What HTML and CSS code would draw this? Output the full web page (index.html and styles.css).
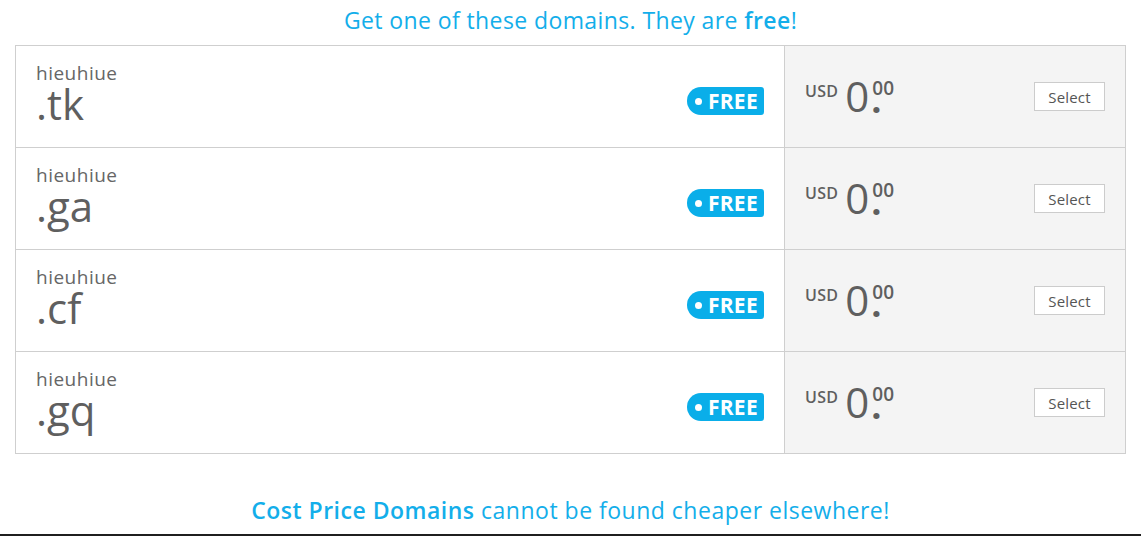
FILE: index.html
```html
<!DOCTYPE html>
<html>
<head>
<meta charset="utf-8">
<link rel="stylesheet" href="styles.css">
</head>
<body>
<div class="page">
  <h2 class="title">Get one of these domains. They are <strong>free</strong>!</h2>
  <div class="table">
    <div class="row">
      <div class="name"><span class="sld">hieuhiue</span><span class="tld">.tk</span></div>
      <div class="badge-cell"><span class="badge"><span class="dot"></span>FREE</span></div>
      <div class="price">
        <div class="amount"><span class="cur">USD</span><span class="int">0</span><span class="dec"><span class="cents">00</span><span class="pt">.</span></span></div>
        <button class="select">Select</button>
      </div>
    </div>
    <div class="row">
      <div class="name"><span class="sld">hieuhiue</span><span class="tld">.ga</span></div>
      <div class="badge-cell"><span class="badge"><span class="dot"></span>FREE</span></div>
      <div class="price">
        <div class="amount"><span class="cur">USD</span><span class="int">0</span><span class="dec"><span class="cents">00</span><span class="pt">.</span></span></div>
        <button class="select">Select</button>
      </div>
    </div>
    <div class="row">
      <div class="name"><span class="sld">hieuhiue</span><span class="tld">.cf</span></div>
      <div class="badge-cell"><span class="badge"><span class="dot"></span>FREE</span></div>
      <div class="price">
        <div class="amount"><span class="cur">USD</span><span class="int">0</span><span class="dec"><span class="cents">00</span><span class="pt">.</span></span></div>
        <button class="select">Select</button>
      </div>
    </div>
    <div class="row">
      <div class="name"><span class="sld">hieuhiue</span><span class="tld">.gq</span></div>
      <div class="badge-cell"><span class="badge"><span class="dot"></span>FREE</span></div>
      <div class="price">
        <div class="amount"><span class="cur">USD</span><span class="int">0</span><span class="dec"><span class="cents">00</span><span class="pt">.</span></span></div>
        <button class="select">Select</button>
      </div>
    </div>
  </div>
  <p class="footer-note"><strong>Cost Price Domains</strong> cannot be found cheaper elsewhere!</p>
</div>
<div class="bottom-bar"></div>
</body>
</html>
```
FILE: styles.css
```css
html, body {
  margin: 0;
  padding: 0;
  background: #fff;
  font-family: "Open Sans", "Liberation Sans", sans-serif;
  color: #666;
}
.page {
  padding: 0 15px;
  height: 534px;
  box-sizing: border-box;
}
.title {
  margin: 0;
  height: 45px;
  padding-top: 4px;
  box-sizing: border-box;
  text-align: center;
  font-size: 23px;
  letter-spacing: 0.4px;
  font-weight: 400;
  line-height: 32px;
  color: #13aeea;
}
.title strong { font-weight: 600; }
.table {
  border: 1px solid #cfcfcf;
}
.row {
  display: flex;
  height: 101px;
  border-top: 1px solid #cfcfcf;
}
.row:first-child { border-top: 0; }
.name {
  flex: 1;
  display: flex;
  flex-direction: column;
  padding: 15px 0 0 20px;
}
.sld {
  font-size: 19px;
  letter-spacing: 0.5px;
  line-height: 24px;
  color: #666;
}
.tld {
  font-size: 42px;
  line-height: 44px;
  color: #5f5f5f;
  margin-top: -3px;
}
.badge-cell {
  display: flex;
  align-items: flex-start;
  padding: 41px 20px 0 0;
}
.badge {
  display: inline-flex;
  align-items: center;
  height: 28px;
  background: #0aaee9;
  color: #fff;
  font-size: 21px;
  letter-spacing: 0.3px;
  font-weight: 700;
  border-radius: 14px 3px 3px 14px;
  padding: 0 6px 0 8px;
  box-sizing: border-box;
}
.dot {
  width: 7px;
  height: 7px;
  border-radius: 50%;
  background: #fff;
  margin-right: 6px;
}
.price {
  width: 341px;
  box-sizing: border-box;
  border-left: 1px solid #cfcfcf;
  background: #f4f4f4;
  display: flex;
  justify-content: space-between;
  align-items: flex-start;
  padding: 0 20px 0 20px;
}
.amount {
  display: flex;
  align-items: flex-start;
  padding-top: 27px;
  color: #5f5f5f;
}
.cur {
  font-size: 16px;
  font-weight: 600;
  letter-spacing: 0.3px;
  line-height: 18px;
  margin-top: 9px;
  margin-right: 7px;
}
.int {
  font-size: 42px;
  line-height: 46px;
  margin-right: 3px;
}
.dec {
  position: relative;
  display: flex;
  flex-direction: column;
}
.cents {
  font-size: 19px;
  font-weight: 600;
  line-height: 18px;
  margin-top: 6px;
}
.pt {
  position: absolute;
  left: -1px;
  top: 24px;
  font-size: 36px;
  font-weight: 700;
  line-height: 6px;
}
.select {
  margin-top: 36px;
  width: 71px;
  height: 29px;
  background: #fff;
  border: 1px solid #cccccc;
  font-family: "Open Sans", "Liberation Sans", sans-serif;
  font-size: 15px;
  letter-spacing: 0.2px;
  color: #555;
  padding: 0;
}
.footer-note {
  margin: 40px 0 0;
  text-align: center;
  font-size: 23px;
  letter-spacing: 0.5px;
  color: #13aeea;
  line-height: 32px;
}
.footer-note strong { font-weight: 600; }
.bottom-bar {
  height: 2px;
  background: #1f1f1f;
}
```
